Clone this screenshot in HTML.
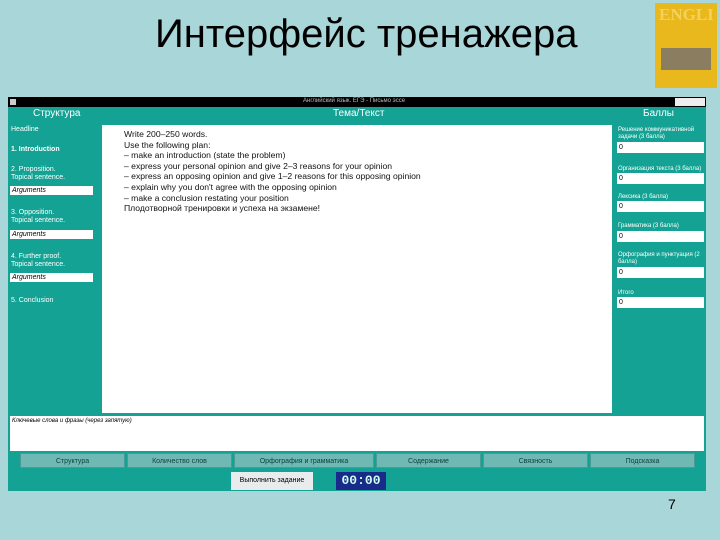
<!DOCTYPE html><html><head><meta charset="utf-8"><style>
body{margin:0;width:720px;height:540px;background:#a9d6d8;position:relative;overflow:hidden;font-family:"Liberation Sans",sans-serif}
.a{position:absolute}
.t{color:#fff;font-size:7px;line-height:8px}
.in{background:#fff;color:#000;font-size:7px;font-style:italic;padding-left:2px;line-height:9px}
.sp{background:#fff;height:11px;font-size:7px;line-height:11px;padding-left:2px;box-sizing:border-box}
.btn{background:#6fb8b4;border:1px solid #4a9a96;color:#0b3f3c;font-size:7px;text-align:center;line-height:15px;height:15px;box-sizing:border-box}
</style></head><body>
<div class="a" style="left:155px;top:12px;font-size:40px;color:#000">Интерфейс тренажера</div>
<div class="a" style="left:655px;top:3px;width:62px;height:85px;background:#e8b81c"><div class="a" style="left:4px;top:2px;font:bold 17px 'Liberation Serif',serif;color:#f3d15a">ENGLI</div><div class="a" style="left:6px;top:45px;width:50px;height:22px;background:#8a7d60"></div></div>
<div class="a" style="left:8px;top:97px;width:698px;height:394px;background:#14a294"></div>
<div class="a" style="left:8px;top:97px;width:698px;height:10px;background:#000"><div class="a" style="left:295px;top:1px;color:#bbb;font-size:6px">Английский язык. ЕГЭ - Письмо эссе</div><div class="a" style="left:667px;top:1px;width:30px;height:8px;background:#eee"></div><div class="a" style="left:2px;top:2px;width:6px;height:6px;background:#ccc"></div></div>
<div class="a t" style="left:33px;top:110px;font-size:10px">Структура</div>
<div class="a t" style="left:333px;top:110px;font-size:10px">Тема/Текст</div>
<div class="a t" style="left:643px;top:110px;font-size:10px">Баллы</div>
<div class="a t" style="left:11px;top:126px">Headline</div>
<div class="a t" style="left:11px;top:146px;font-weight:bold">1. Introduction</div>
<div class="a t" style="left:11px;top:166px">2. Proposition.<br>Topical sentence.</div>
<div class="a in" style="left:10px;top:186px;width:81px">Arguments</div>
<div class="a t" style="left:11px;top:209px">3. Opposition.<br>Topical sentence.</div>
<div class="a in" style="left:10px;top:230px;width:81px">Arguments</div>
<div class="a t" style="left:11px;top:253px">4. Further proof.<br>Topical sentence.</div>
<div class="a in" style="left:10px;top:273px;width:81px">Arguments</div>
<div class="a t" style="left:11px;top:297px">5. Conclusion</div>
<div class="a" style="left:102px;top:125px;width:510px;height:288px;background:#fff;font-size:8.6px;line-height:10.6px;color:#111;padding:4px 0 0 22px;box-sizing:border-box">Write 200–250 words.<br>Use the following plan:<br>– make an introduction (state the problem)<br>– express your personal opinion and give 2–3 reasons for your opinion<br>– express an opposing opinion and give 1–2 reasons for this opposing opinion<br>– explain why you don't agree with the opposing opinion<br>– make a conclusion restating your position<br>Плодотворной тренировки и успеха на экзамене!</div>
<div class="a t" style="left:618px;top:127px;font-size:6px;line-height:7px">Решение коммуникативной<br>задачи (3 балла)</div>
<div class="a sp" style="left:617px;top:142px;width:87px">0</div>
<div class="a t" style="left:618px;top:165px;font-size:6px">Организация текста (3 балла)</div>
<div class="a sp" style="left:617px;top:173px;width:87px">0</div>
<div class="a t" style="left:618px;top:193px;font-size:6px">Лексика (3 балла)</div>
<div class="a sp" style="left:617px;top:201px;width:87px">0</div>
<div class="a t" style="left:618px;top:222px;font-size:6px">Грамматика (3 балла)</div>
<div class="a sp" style="left:617px;top:231px;width:87px">0</div>
<div class="a t" style="left:618px;top:252px;font-size:6px;line-height:7px">Орфография и пунктуация (2<br>балла)</div>
<div class="a sp" style="left:617px;top:267px;width:87px">0</div>
<div class="a t" style="left:618px;top:289px;font-size:6px">Итого</div>
<div class="a sp" style="left:617px;top:297px;width:87px">0</div>
<div class="a" style="left:10px;top:416px;width:694px;height:35px;background:#fff;font-size:6px;font-style:italic;padding:2px 0 0 2px;box-sizing:border-box">Ключевые слова и фразы (через запятую)</div>
<div class="a btn" style="left:20px;top:453px;width:105px">Структура</div>
<div class="a btn" style="left:127px;top:453px;width:105px">Количество слов</div>
<div class="a btn" style="left:234px;top:453px;width:140px">Орфография и грамматика</div>
<div class="a btn" style="left:376px;top:453px;width:105px">Содержание</div>
<div class="a btn" style="left:483px;top:453px;width:105px">Связность</div>
<div class="a btn" style="left:590px;top:453px;width:105px">Подсказка</div>
<div class="a" style="left:231px;top:472px;width:82px;height:18px;background:#e8ecec;font-size:7px;line-height:18px;text-align:center">Выполнить задание</div>
<div class="a" style="left:336px;top:472px;width:50px;height:18px;background:#1a2a8a;color:#cfe;font:bold 13px 'Liberation Mono',monospace;line-height:18px;text-align:center">00:00</div>
<div class="a" style="left:668px;top:496px;font-size:14px">7</div>
</body></html>
